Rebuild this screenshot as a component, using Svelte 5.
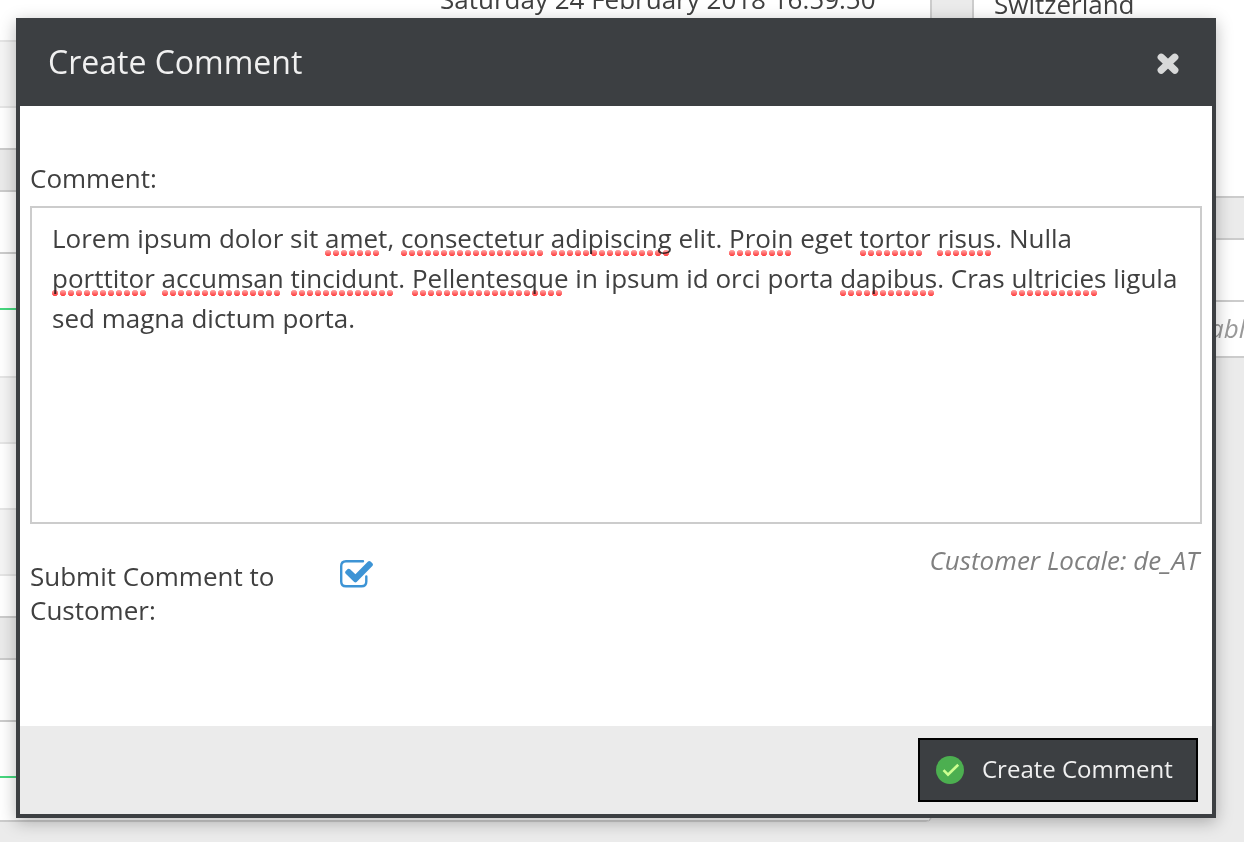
<script>
  const comment = [
    ['Lorem ipsum dolor sit '], ['amet', 7], [', '], ['consectetur', 18], [' '], ['adipiscing', 15],
    [' elit. '], ['Proin', 8], [' eget '], ['tortor', 8], [' '], ['risus', 7], ['. Nulla '],
    ['porttitor', 12], [' '], ['accumsan', 15], [' '], ['tincidunt', 13], ['. '], ['Pellentesque', 19],
    [' in ipsum id orci porta '], ['dapibus', 12], ['. Cras '], ['ultricies', 11],
    [' ligula sed magna dictum porta.']
  ];

  // Rows of the page behind the dialog: height, fill and bottom rule.
  const leftRows = [
    [42, 'plain first', 'soft'], [66, 'tint', 'soft'], [42, 'plain', 'hard'], [42, 'head', 'hard'],
    [62, 'plain', 'hard'], [56, 'plain', 'green'], [68, 'plain', 'soft'], [66, 'tint', 'soft'],
    [66, 'plain', 'soft'], [66, 'tint', 'soft'], [42, 'plain', 'hard'], [42, 'head', 'hard'],
    [62, 'plain', 'hard'], [56, 'plain', 'green'], [44, 'plain', 'hard']
  ];
</script>

<div class="page">
  <div class="backdrop">
    <div class="left">
      {#each leftRows as [height, fill, rule], i}
        <div class="row {fill} {rule}" style="height:{height}px">
          {#if i === 0}<span class="date">Saturday 24 February 2018 16:59:50</span>{/if}
        </div>
      {/each}
    </div>
    <div class="right">
      <div class="row plain hard country">Switzerland</div>
      <div class="row head hard"></div>
      <div class="row plain hard gap"></div>
      <div class="row plain hard note">No data available</div>
    </div>
  </div>

  <div class="dialog">
    <header>
      <h1>Create Comment</h1>
      <svg class="close" width="24" height="24" viewBox="0 0 24 24">
        <path d="M5.200 5.200L18.800 18.200M18.800 5.200L5.200 18.200" />
      </svg>
    </header>
    <main>
      <div class="label">Comment:</div>
      <div class="area">
        {#each comment as [text, dots]}{#if dots}<span class="miss">{text}<i style="width:{dots * 8}px"></i></span>{:else}{text}{/if}{/each}
      </div>
      <div class="options">
        <div class="submit">Submit Comment to Customer:</div>
        <svg class="check" width="36" height="32" viewBox="0 0 36 32">
          <path d="M25 3.200H8C5 3.200 3.200 5 3.200 8V23.500C3.200 26.500 5 28.300 8 28.300H23.500C26.500 28.300 28.300 26.500 28.300 23.500V18.500" fill="none" stroke="#3d94d5" stroke-width="2.400" stroke-linecap="round" />
          <path d="M7.500 13.200L9.700 11Q10.900 10.200 12.100 11.200L17.400 16.200L30 3.600Q31.400 2.600 32.600 3.600L34.600 5.600Q35.400 6.700 34.600 7.800L18.600 24Q17.400 24.900 16.200 24L7.500 15.500Q6.600 14.300 7.500 13.200Z" fill="#3d94d5" />
        </svg>
        <div class="locale">Customer Locale: de_AT</div>
      </div>
    </main>
    <footer>
      <button>
        <svg width="28" height="28" viewBox="0 0 28 28">
          <circle cx="14" cy="14" r="14" fill="#4caf50" />
          <path d="M7.500 14.200L12 18.700L22.200 8.700" fill="none" stroke="#ccff90" stroke-width="2.600" />
        </svg>
        <span>Create Comment</span>
      </button>
    </footer>
  </div>
</div>

<style>
  :global(body) { margin: 0; overflow: hidden; }
  * { box-sizing: border-box; }
  .page {
    position: relative;
    width: 1244px;
    height: 842px;
    overflow: hidden;
    background: #ebebeb;
    color: #404040;
    font-family: "Open Sans", sans-serif;
    font-size: 26px;
  }
  .backdrop { display: flex; gap: 40px; align-items: flex-start; height: 842px; }
  .left { width: 932px; border-right: 2px solid #ccc; border-bottom-right-radius: 6px; overflow: hidden; }
  .right { width: 272px; border-left: 2px solid #ccc; }
  .row { border-bottom: 2px solid #ccc; background: #fff; white-space: nowrap; }
  .row.first { display: flow-root; }
  .row.tint { background: #f5f5f5; }
  .row.head { background: #ebebeb; height: 42px; }
  .row.soft { border-color: #e5e5e5; }
  .row.green { border-color: #46d77e; }
  .date { display: block; margin: -19px 0 0 440px; line-height: 36px; }
  .country { padding-left: 20px; line-height: 36px; }
  .right .country { margin-top: -14px; height: 212px; }
  .gap { height: 62px; }
  .note { height: 56px; padding-left: 81px; line-height: 52px; font-style: italic; color: #999; }

  .dialog {
    position: absolute;
    left: 16px;
    top: 18px;
    width: 1200px;
    height: 800px;
    display: flex;
    flex-direction: column;
    border: 4px solid #3c3f42;
    background: #fff;
    box-shadow: 0 4px 16px rgba(0, 0, 0, .28);
  }
  header {
    height: 84px;
    padding: 0 32px 0 28px;
    display: flex;
    align-items: center;
    justify-content: space-between;
    background: #3c3f42;
    color: #f0f0f0;
  }
  h1 { margin: 0 0 4px; font-size: 32px; line-height: 44px; font-weight: 400; }
  .close path { stroke: #d8d9d9; stroke-width: 7.200; stroke-linecap: round; fill: none; }
  main { flex: 1; padding: 54px 10px 0; }
  .label { line-height: 36px; height: 46px; }
  .area {
    height: 318px;
    padding: 10px 20px;
    border: 2px solid #ccc;
    line-height: 40px;
  }
  .miss { position: relative; }
  .miss i {
    position: absolute;
    left: 0;
    bottom: 0;
    height: 6px;
    background:
      radial-gradient(circle at 3px 3px, transparent 2.800px, #fff 3.500px) 0 0 / 8px 6px,
      linear-gradient(#ffaaaa, #ff3b3b);
    mix-blend-mode: multiply;
  }
  .options { display: flex; align-items: flex-start; padding-top: 18px; }
  .submit { width: 270px; margin: 17px 38px 0 0; line-height: 34px; }
  .check { margin-top: 16px; }
  .locale { margin: 0 3px 0 auto; line-height: 36px; font-style: italic; color: #808080; }
  footer {
    height: 88px;
    padding: 12px 14px;
    display: flex;
    justify-content: flex-end;
    background: #ebebeb;
  }
  button {
    width: 280px;
    height: 64px;
    padding: 0 16px;
    display: flex;
    align-items: center;
    gap: 18px;
    border: 2px solid #000;
    background: #3c3f42;
    color: #f0f0f0;
    font: 24px/34px "Open Sans", sans-serif;
  }
  button span { white-space: nowrap; margin-bottom: 3px; }
</style>
